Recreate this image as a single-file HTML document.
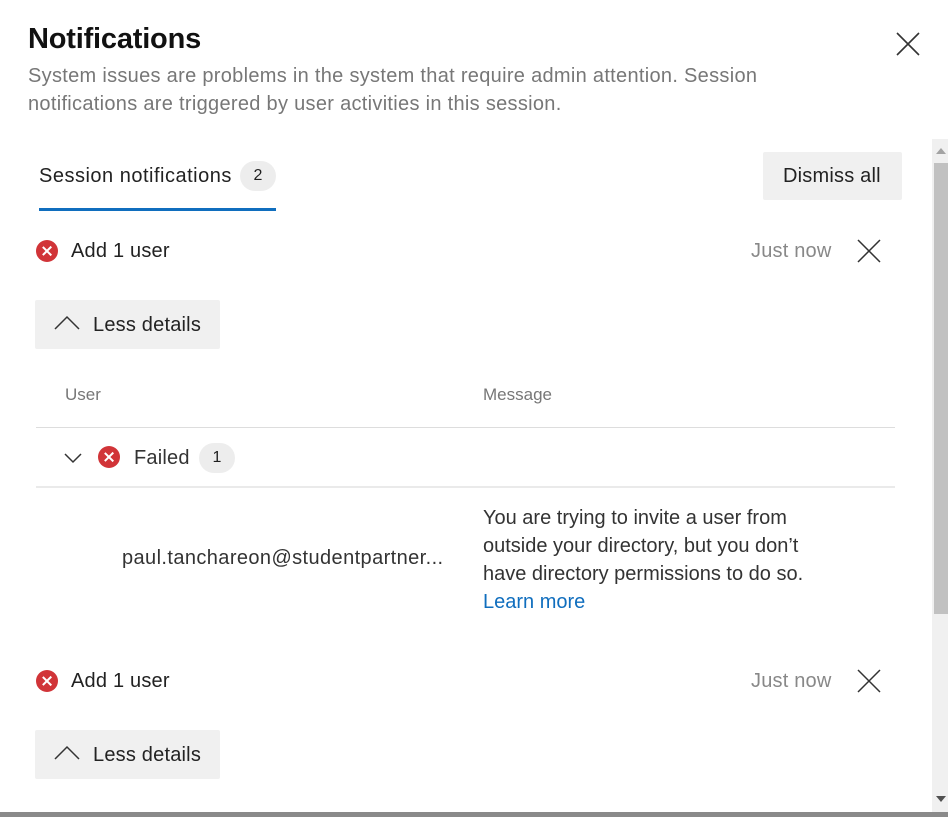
<!DOCTYPE html>
<html><head><style>
*{margin:0;padding:0;box-sizing:border-box}
body{width:948px;height:817px;background:#fff;font-family:"Liberation Sans",sans-serif;color:#1f1f1f;position:relative;overflow:hidden}
.a{position:absolute;white-space:nowrap}
.t{font-size:20px;letter-spacing:0.2px}
.err{position:absolute;width:22px;height:22px;border-radius:50%;background:#d13438}
.err:before,.err:after{content:"";position:absolute;left:10px;top:5px;width:2.4px;height:12px;background:#fff;transform:rotate(45deg)}
.err:after{transform:rotate(-45deg)}
.btn{position:absolute;background:#f0f0f0;border-radius:2px}
.badge{position:absolute;background:#ededed;border-radius:18px;text-align:center;font-size:16px}
</style></head><body>
<div class="a" style="left:28px;top:23px;font-size:29px;font-weight:bold;color:#111;letter-spacing:-0.2px">Notifications</div>
<svg class="a" style="left:895px;top:31px" width="26" height="26"><path d="M2 2L24 24M24 2L2 24" stroke="#333" stroke-width="1.6"/></svg>
<div class="a" style="left:28px;top:62px;font-size:20px;line-height:28px;color:#777;letter-spacing:0.3px">System issues are problems in the system that require admin attention. Session<br>notifications are triggered by user activities in this session.</div>

<div class="a t" style="left:39px;top:165px;color:#222;letter-spacing:0.5px">Session notifications</div>
<div class="badge" style="left:240px;top:161px;width:36px;height:30px;line-height:30px">2</div>
<div class="a" style="left:39px;top:208px;width:237px;height:3px;background:#106ebe"></div>
<div class="btn" style="left:763px;top:152px;width:139px;height:48px"></div>
<div class="a t" style="left:783px;top:165px;color:#222">Dismiss all</div>

<div class="err" style="left:36px;top:240px"></div>
<div class="a t" style="left:71px;top:240px;color:#222;letter-spacing:0.2px">Add 1 user</div>
<div class="a t" style="left:751px;top:240px;color:#888">Just now</div>
<svg class="a" style="left:857px;top:239px" width="24" height="24"><path d="M1 1L23 23M23 1L1 23" stroke="#333" stroke-width="1.5"/></svg>
<div class="btn" style="left:35px;top:300px;width:185px;height:49px"></div>
<svg class="a" style="left:54px;top:315px" width="26" height="16"><path d="M1 14L13 2L25 14" stroke="#333" stroke-width="1.5" fill="none"/></svg>
<div class="a t" style="left:93px;top:314px;color:#222">Less details</div>

<div class="a" style="left:65px;top:385px;font-size:17px;color:#777">User</div>
<div class="a" style="left:483px;top:385px;font-size:17px;color:#777">Message</div>
<div class="a" style="left:36px;top:427px;width:859px;height:1px;background:#ddd"></div>
<svg class="a" style="left:64px;top:452px" width="18" height="12"><path d="M1 2L9 10L17 2" stroke="#333" stroke-width="1.5" fill="none"/></svg>
<div class="err" style="left:98px;top:446px"></div>
<div class="a t" style="left:134px;top:447px;color:#333">Failed</div>
<div class="badge" style="left:199px;top:443px;width:36px;height:30px;line-height:30px">1</div>
<div class="a" style="left:36px;top:486px;width:859px;height:2px;background:#eaeaea"></div>
<div class="a t" style="left:122px;top:547px;color:#333;letter-spacing:0.4px">paul.tanchareon@studentpartner...</div>
<div class="a t" style="left:483px;top:504px;line-height:28px;color:#333;letter-spacing:0px">You are trying to invite a user from<br>outside your directory, but you don’t<br>have directory permissions to do so.<br><span style="color:#106ebe">Learn more</span></div>

<div class="err" style="left:36px;top:670px"></div>
<div class="a t" style="left:71px;top:670px;color:#222;letter-spacing:0.2px">Add 1 user</div>
<div class="a t" style="left:751px;top:670px;color:#888">Just now</div>
<svg class="a" style="left:857px;top:669px" width="24" height="24"><path d="M1 1L23 23M23 1L1 23" stroke="#333" stroke-width="1.5"/></svg>
<div class="btn" style="left:35px;top:730px;width:185px;height:49px"></div>
<svg class="a" style="left:54px;top:745px" width="26" height="16"><path d="M1 14L13 2L25 14" stroke="#333" stroke-width="1.5" fill="none"/></svg>
<div class="a t" style="left:93px;top:744px;color:#222">Less details</div>

<div class="a" style="left:932px;top:139px;width:16px;height:673px;background:#f0f0f0"></div>
<div class="a" style="left:934px;top:163px;width:14px;height:451px;background:#c1c1c1"></div>
<svg class="a" style="left:936px;top:147px" width="10" height="8"><path d="M0 7L5 1L10 7Z" fill="#a3a3a3"/></svg>
<svg class="a" style="left:936px;top:795px" width="10" height="8"><path d="M0 1L5 7L10 1Z" fill="#505050"/></svg>
<div class="a" style="left:0;top:812px;width:948px;height:5px;background:#8a8a8a"></div>
</body></html>
